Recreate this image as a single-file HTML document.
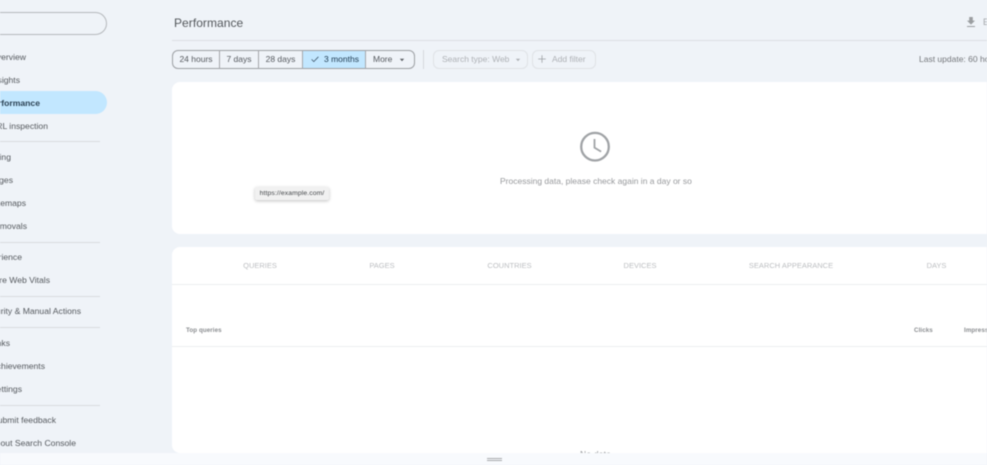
<!DOCTYPE html>
<html><head><meta charset="utf-8">
<style>
html,body{margin:0;padding:0;background:#eff3f8}
#r{position:relative;width:987px;height:465px;overflow:hidden;background:#eff3f8;font-family:"Liberation Sans",sans-serif;filter:blur(.45px)}
#r div,#r span.a{position:absolute;white-space:nowrap}
.n{font-size:8.6px;letter-spacing:0;color:#55595e;line-height:12px;height:12px}
.d{left:0;width:100px;height:1px;background:#d8dbdf}
.t{font-size:7.5px;letter-spacing:0;color:#bcbec1;top:260px;line-height:12px;transform:translateX(-50%)}
.h{font-size:6.2px;color:#75787c;top:326px;line-height:9px;letter-spacing:.1px;font-weight:bold;opacity:.85}
.b{top:50px;height:19px;line-height:19px;font-size:8.5px;letter-spacing:0;color:#55595e;text-align:center;box-sizing:border-box}
</style></head><body><div id="r">
<div style="left:-40px;top:12px;width:147px;height:23px;box-sizing:border-box;border:1px solid #b5b8bc;border-radius:12px"></div>
<div style="left:-40px;top:91px;width:147px;height:23px;background:#c2e7ff;border-radius:12px"></div>
<div class="n" style="right:961px;top:51px">Overview</div>
<div class="n" style="right:967px;top:74px">Insights</div>
<div class="n" style="right:947px;top:97px;color:#2b4153;font-weight:bold">Performance</div>
<div class="n" style="right:939px;top:120px">URL inspection</div>
<div class="d" style="top:141px"></div>
<div class="n" style="right:976px;top:151px">Indexing</div>
<div class="n" style="right:974px;top:174px">Pages</div>
<div class="n" style="right:961px;top:197px">Sitemaps</div>
<div class="n" style="right:960px;top:220px">Removals</div>
<div class="d" style="top:242px"></div>
<div class="n" style="right:965px;top:251px">Experience</div>
<div class="n" style="right:937px;top:274px">Core Web Vitals</div>
<div class="d" style="top:296px"></div>
<div class="n" style="right:906px;top:305px">Security &amp; Manual Actions</div>
<div class="d" style="top:327px"></div>
<div class="n" style="right:977px;top:337px">Links</div>
<div class="n" style="right:942px;top:360px">Achievements</div>
<div class="n" style="right:965px;top:383px">Settings</div>
<div class="d" style="top:405px"></div>
<div class="n" style="right:931px;top:414px">Submit feedback</div>
<div class="n" style="right:911px;top:437px">About Search Console</div>

<div style="left:174px;top:15px;font-size:12px;line-height:16px;color:#53575b;letter-spacing:.05px">Performance</div>
<div style="left:172px;top:40px;width:815px;height:1px;background:#dcdfe3"></div>
<svg style="position:absolute;left:966px;top:16px" width="10" height="12" viewBox="0 0 10 12"><path d="M3.2 1h3.6v3.6H9L5 8.6 1 4.6h2.2z" fill="#9a9da0"/><rect x="1" y="10" width="8" height="1" fill="#9a9da0"/></svg>
<div style="left:983px;top:17px;font-size:9px;line-height:11px;color:#a3a6a9">E</div>

<div style="left:172px;top:50px;width:243px;height:19px;box-sizing:border-box;border:1px solid #9da0a4;border-radius:6px"></div>
<div class="b" style="left:173px;width:46px">24 hours</div>
<div class="b" style="left:220px;width:38px">7 days</div>
<div class="b" style="left:259px;width:43px">28 days</div>
<div style="left:303px;top:51px;width:62px;height:17px;background:#c2e7ff"></div>
<div class="b" style="left:324px;color:#1f3a50">3 months</div>
<svg style="position:absolute;left:311px;top:56px" width="8" height="7" viewBox="0 0 8 7"><path d="M.6 3.4l2.2 2.2L7.4.8" fill="none" stroke="#3a5266" stroke-width=".8"/></svg>
<div class="b" style="left:373px">More</div>
<svg style="position:absolute;left:399px;top:58px" width="6" height="4" viewBox="0 0 6 4"><path d="M.8.8h4.4L3 3.2z" fill="#5a5e63"/></svg>
<div style="left:219px;top:50px;width:1px;height:19px;background:#a3a6aa"></div>
<div style="left:258px;top:50px;width:1px;height:19px;background:#a3a6aa"></div>
<div style="left:302px;top:50px;width:1px;height:19px;background:#a3a6aa"></div>
<div style="left:365px;top:50px;width:1px;height:19px;background:#a3a6aa"></div>
<div style="left:423px;top:50px;width:1px;height:19px;background:#d5d8dc"></div>
<div style="left:433px;top:50px;width:95px;height:19px;box-sizing:border-box;border:1px solid #dfe2e6;border-radius:6px"></div>
<div class="b" style="left:442px;color:#aeb1b5">Search type: Web</div>
<svg style="position:absolute;left:515px;top:58px" width="6" height="4" viewBox="0 0 6 4"><path d="M.8.8h4.4L3 3.2z" fill="#aeb1b5"/></svg>
<div style="left:532px;top:50px;width:64px;height:19px;box-sizing:border-box;border:1px solid #dfe2e6;border-radius:6px"></div>
<svg style="position:absolute;left:537px;top:54px" width="10" height="10" viewBox="0 0 10 10"><path d="M5 1.2v7.6M1.2 5h7.6" stroke="#9c9fa3" stroke-width=".8" fill="none"/></svg>
<div class="b" style="left:552px;color:#aeb1b5">Add filter</div>
<div style="left:919px;top:53px;font-size:8.5px;line-height:12px;color:#75787c">Last update: 60 hours ago</div>

<div style="left:172px;top:82px;width:830px;height:152px;background:#fff;border-radius:8px"></div>
<svg style="position:absolute;left:579px;top:131px" width="32" height="32" viewBox="0 0 32 32"><circle cx="16" cy="15.7" r="13.8" fill="none" stroke="#a0a3a6" stroke-width="2.3"/><path d="M15.5 8v8.6l6.6 4" fill="none" stroke="#a0a3a6" stroke-width="1.8"/></svg>
<div style="left:500px;top:175px;font-size:8.5px;line-height:12px;color:#97999c">Processing data, please check again in a day or so</div>
<div style="left:255px;top:187px;width:74px;height:13px;box-sizing:border-box;background:#f1f1f1;border-radius:2px;box-shadow:0 1px 3px rgba(0,0,0,.25);font-size:6.8px;line-height:13px;color:#45484b;text-align:center;letter-spacing:.1px">https://example.com/</div>

<div style="left:172px;top:247px;width:830px;height:206px;background:#fff;border-radius:8px;overflow:hidden"></div>
<div class="t" style="left:260px">QUERIES</div>
<div class="t" style="left:382px">PAGES</div>
<div class="t" style="left:509.5px">COUNTRIES</div>
<div class="t" style="left:640px">DEVICES</div>
<div class="t" style="left:791px">SEARCH APPEARANCE</div>
<div class="t" style="left:936.5px">DAYS</div>
<div style="left:172px;top:284px;width:815px;height:1px;background:#eceef0"></div>
<div class="h" style="left:186px">Top queries</div>
<div class="h" style="left:914px">Clicks</div>
<div class="h" style="left:964px">Impressions</div>
<div style="left:172px;top:346px;width:815px;height:1px;background:#eceef0"></div>
<div style="left:580px;top:448px;font-size:8.5px;line-height:12px;color:#97999c;letter-spacing:.2px">No data</div>
<div style="left:0;top:453px;width:987px;height:12px;background:#f8fafd"></div>
<div style="left:487px;top:458px;width:15px;height:1px;background:#a8aaad"></div>
<div style="left:487px;top:460px;width:15px;height:1px;background:#a8aaad"></div>
</div></body></html>
